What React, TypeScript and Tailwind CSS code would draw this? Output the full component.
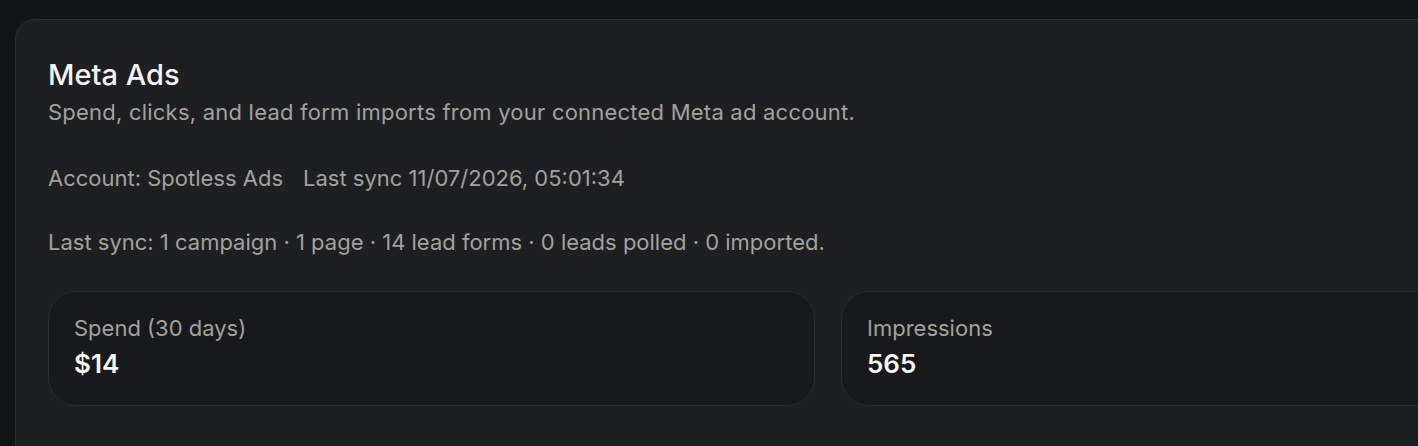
const metrics = [
  { label: "Spend (30 days)", value: "$14" },
  { label: "Impressions", value: "565" },
];

export default function App() {
  return (
    <div
      className="h-screen w-full overflow-hidden bg-[#131418] pl-[15px] pt-[19px]"
      style={{ fontFamily: "Inter, 'Noto Sans', sans-serif" }}
    >
      <section className="w-[1800px] rounded-[20px] border border-[#2c2d31] bg-[#1e1f23] px-[32px] pt-[38px] pb-16">
        <h2 className="text-[29px] leading-[34px] font-medium text-[#f3f3f1]">Meta Ads</h2>
        <p className="mt-[5px] text-[22px] leading-[30px] tracking-[0.01em] text-[#a2a29b]">
          Spend, clicks, and lead form imports from your connected Meta ad account.
        </p>

        <div className="mt-[36px] flex gap-[20px] text-[22px] leading-[30px] text-[#a2a29b]">
          <span>Account: Spotless Ads</span>
          <span>Last sync 11/07/2026, 05:01:34</span>
        </div>

        <p className="mt-[34px] text-[22px] leading-[30px] text-[#a2a29b]">
          Last sync: 1 campaign · 1 page · 14 lead forms · 0 leads polled · 0 imported.
        </p>

        <div className="mt-[34px] grid grid-cols-[767px_767px] gap-[26px]">
          {metrics.map((m) => (
            <div
              key={m.label}
              className="rounded-[28px] border border-[#2b2c30] bg-[#18191d] px-[25px] pt-[21px] pb-[25px]"
            >
              <div className="text-[22px] leading-[30px] text-[#a2a29b]">{m.label}</div>
              <div className="mt-[5px] text-[26px] leading-[32px] font-semibold text-[#f5f5f3]">
                {m.value}
              </div>
            </div>
          ))}
        </div>
      </section>
    </div>
  );
}
